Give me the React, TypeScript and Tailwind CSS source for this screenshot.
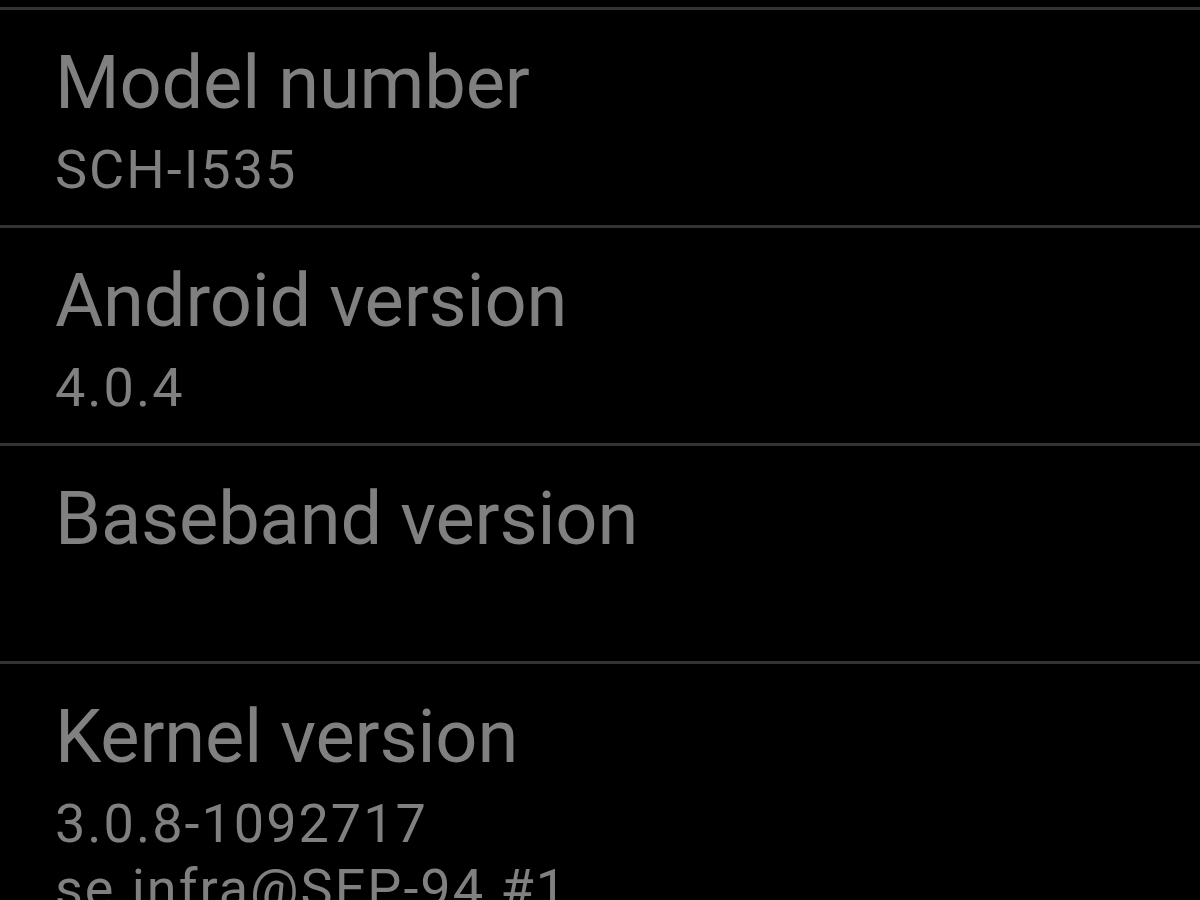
import React from "react";

const items: { title: string; lines: string[] }[] = [
  { title: "Model number", lines: ["SCH-I535"] },
  { title: "Android version", lines: ["4.0.4"] },
  { title: "Baseband version", lines: [] },
  { title: "Kernel version", lines: ["3.0.8-1092717", "se.infra@SEP-94 #1"] },
];

export default function App() {
  return (
    <div
      className="w-[1200px] h-[900px] overflow-hidden bg-black pt-[7px]"
      style={{ fontFamily: "Roboto, 'Noto Sans', sans-serif" }}
    >
      {items.map((it) => (
        <div
          key={it.title}
          className="h-[218px] border-t-[3px] border-[#333333] pl-[55px] pt-[19px] text-[#808080]"
        >
          <div className="text-[74px] leading-[108px] tracking-[-0.15px] whitespace-nowrap">{it.title}</div>
          {it.lines.map((l) => (
            <div key={l} className="text-[54px] leading-[65px] tracking-[2px] whitespace-nowrap">
              {l}
            </div>
          ))}
        </div>
      ))}
    </div>
  );
}
